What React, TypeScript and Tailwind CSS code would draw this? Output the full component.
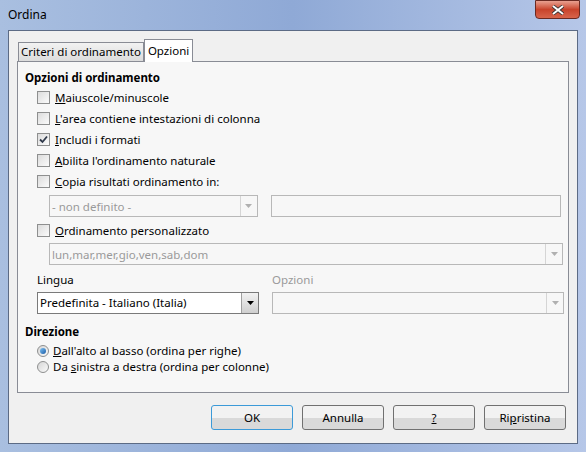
const font = { fontFamily: '"Noto Sans", "Open Sans", sans-serif' };

function Check({ label, u, rest, checked }: { label?: string; u: string; rest: string; checked?: boolean }) {
  return (
    <div className="flex items-center h-[21px] gap-[5px]">
      <div className="w-[13px] h-[13px] border border-[#8e8f8f] bg-gradient-to-br from-[#dcdcdc] to-[#fbfbfb] flex items-center justify-center">
        {checked && (
          <svg width="11" height="11" viewBox="0 0 11 11">
            <path d="M2 5.5 L4.5 8 L9 2.5" stroke="#303a4b" strokeWidth="1.8" fill="none" />
          </svg>
        )}
      </div>
      <span className="text-[11.5px] text-black">
        {label}
        <span className="underline">{u}</span>
        {rest}
      </span>
    </div>
  );
}

function Combo({ text, w, disabled }: { text: string; w: string; disabled?: boolean }) {
  return (
    <div className={`${w} h-[22px] border ${disabled ? 'border-[#b8b8b8] bg-[#f7f7f7]' : 'border-[#7a7a7a] bg-white'} flex items-center`}>
      <span className={`flex-1 px-[2px] text-[11.5px] ${disabled ? 'text-[#9a9a9a]' : 'text-black'}`}>{text}</span>
      <div className={`w-[17px] h-[20px] border-l ${disabled ? 'border-[#d5d5d5]' : 'border-[#a0a0a0] bg-gradient-to-b from-[#f2f2f2] to-[#cfcfcf]'} flex items-center justify-center`}>
        <svg width="7" height="4" viewBox="0 0 7 4">
          <path d="M0 0 H7 L3.5 4 Z" fill={disabled ? '#b0b0b0' : '#000'} />
        </svg>
      </div>
    </div>
  );
}

function Radio({ on, a, u, rest }: { on?: boolean; a: string; u: string; rest: string }) {
  return (
    <div className="flex items-center h-[16px] gap-[4px]">
      <div className="w-[12px] h-[12px] rounded-full border border-[#8e8f8f] bg-gradient-to-br from-[#d6d6d6] to-[#fafafa] flex items-center justify-center">
        {on && <div className="w-[6px] h-[6px] rounded-full bg-gradient-to-br from-[#7ec2f3] to-[#1a5da7]" />}
      </div>
      <span className="text-[11.5px]">
        {a}
        <span className="underline">{u}</span>
        {rest}
      </span>
    </div>
  );
}

function Btn({ children, def }: { children: React.ReactNode; def?: boolean }) {
  return (
    <div className={`w-[82px] h-[25px] rounded-[3px] border ${def ? 'border-[#3c9ad8]' : 'border-[#707070]'} bg-gradient-to-b from-[#f2f2f2] from-50% to-[#d9d9d9] to-50% flex items-center justify-center text-[11.5px]`}>
      {children}
    </div>
  );
}

export default function App() {
  return (
    <div style={font} className="w-[586px] h-[452px] bg-gradient-to-r from-[#a9bfe0] via-[#8fa9d6] to-[#b6c7e8] relative px-[8px] pb-[8px] pt-[30px] overflow-hidden">
      <div className="absolute left-[8px] top-[6px] text-[12px] text-black">Ordina</div>
      <div className="absolute right-[6px] top-0 w-[45px] h-[19px] rounded-b-[4px] border border-[#6a2a22] bg-gradient-to-b from-[#e8a090] via-[#c8432b] to-[#d7644b] flex items-center justify-center">
        <svg width="14" height="10" viewBox="0 0 14 10">
          <path d="M2 1 L12 9 M12 1 L2 9" stroke="#333" strokeWidth="3.6" />
          <path d="M2 1 L12 9 M12 1 L2 9" stroke="#fff" strokeWidth="2" />
        </svg>
      </div>
      <div className="w-full h-full bg-[#f0f0f0] border border-[#5c6b85] px-[8px] pt-[7px] text-black">
        <div className="flex items-end h-[23px] pl-[1px]">
          <div className="h-[19px] px-[2px] border border-[#898c95] border-b-0 bg-gradient-to-b from-[#f2f2f2] to-[#dcdcdc] text-[11.5px] flex items-center">Criteri di ordinamento</div>
          <div className="h-[23px] px-[3px] border border-[#898c95] border-b-0 bg-white text-[11.5px] flex items-center -mb-px relative z-10">Opzioni</div>
        </div>
        <div className="h-[332px] border border-[#898c95] bg-[#f7f7f7] px-[7px] pt-[7px]">
          <div className="text-[11.5px] font-bold mb-[1px]">Opzioni di ordinamento</div>
          <div className="pl-[12px]">
            <Check u="M" rest="aiuscole/minuscole" />
            <Check u="L" rest="'area contiene intestazioni di colonna" />
            <Check checked u="I" rest="ncludi i formati" />
            <Check u="A" rest="bilita l'ordinamento naturale" />
            <Check u="C" rest="opia risultati ordinamento in:" />
            <div className="flex gap-[13px] pl-[12px] mt-[3px] mb-[3px]">
              <Combo disabled text="- non definito -" w="w-[210px]" />
              <div className="w-[292px] h-[22px] border border-[#b8b8b8] bg-[#f7f7f7]" />
            </div>
            <Check u="O" rest="rdinamento personalizzato" />
            <div className="pl-[12px] mt-[2px]">
              <Combo disabled text="lun,mar,mer,gio,ven,sab,dom" w="w-[514px]" />
            </div>
            <div className="flex gap-[13px] mt-[6px] text-[11.5px]">
              <div className="w-[222px]">
                <div className="mb-[3px]">Lin<span className="underline">g</span>ua</div>
                <Combo text="Predefinita - Italiano (Italia)" w="w-[222px]" />
              </div>
              <div>
                <div className="mb-[3px] text-[#9a9a9a]">Opzioni</div>
                <Combo disabled text="" w="w-[292px]" />
              </div>
            </div>
          </div>
          <div className="text-[11.5px] font-bold mt-[9px] mb-[3px]">Direzione</div>
          <div className="pl-[12px]">
            <Radio on a="" u="D" rest="all'alto al basso (ordina per righe)" />
            <Radio a="Da " u="s" rest="inistra a destra (ordina per colonne)" />
          </div>
        </div>
        <div className="flex justify-end gap-[9px] mt-[12px] pr-[3px]">
          <Btn def>OK</Btn>
          <Btn>Annulla</Btn>
          <Btn><span className="underline">?</span></Btn>
          <Btn>Ri<span className="underline">p</span>ristina</Btn>
        </div>
      </div>
    </div>
  );
}
